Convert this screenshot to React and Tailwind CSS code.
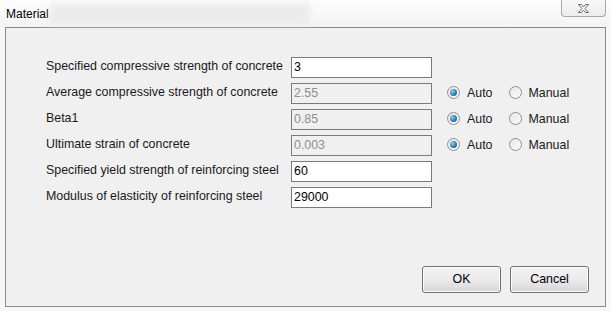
import React from "react";

const rows = [
  { label: "Specified compressive strength of concrete", value: "3" },
  { label: "Average compressive strength of concrete", value: "2.55", auto: true },
  { label: "Beta1", value: "0.85", auto: true },
  { label: "Ultimate strain of concrete", value: "0.003", auto: true },
  { label: "Specified yield strength of reinforcing steel", value: "60" },
  { label: "Modulus of elasticity of reinforcing steel", value: "29000" },
];

function Radio({ checked, label }) {
  return (
    <div className="flex items-center gap-[7px]">
      <span className="w-[13px] h-[13px] rounded-full border border-[#8e8f8f] bg-gradient-to-br from-[#e6e6e6] to-[#fbfbfb] flex items-center justify-center">
        {checked && (
          <span className="w-[7px] h-[7px] rounded-full bg-[radial-gradient(circle_at_35%_35%,#8fd0f5,#2a7fb5_55%,#134a6e)]" />
        )}
      </span>
      <span>{label}</span>
    </div>
  );
}

function Button({ children }) {
  return (
    <button className="w-[79px] h-[27px] rounded-[3px] border border-[#707070] bg-gradient-to-b from-[#f2f2f2] via-[#ebebeb] to-[#d6d6d6] text-[12.4px] text-black shadow-[inset_0_0_0_1px_#fcfcfc]">
      {children}
    </button>
  );
}

export default function App() {
  return (
    <div
      className="w-[611px] h-[311px] bg-[#f7f7f7] flex flex-col text-[12.4px] text-[#1a1a1a]"
      style={{ fontFamily: '"Liberation Sans", Arial, sans-serif' }}
    >
      <div className="h-[27px] flex items-start bg-gradient-to-b from-[#fdfdfd] to-[#f3f3f3]">
        <div className="pl-[6px] pt-[5px] text-[12px] text-black w-[50px]">Material</div>
        <div className="mt-[3px] w-[260px] h-[22px] bg-[#e6e6e6] blur-[3px] opacity-70" />
        <div className="flex-1" />
        <div className="w-[45px] h-[17px] mr-[5px] border border-t-0 border-[#a8a8a8] rounded-b-[4px] bg-gradient-to-b from-[#f8f8f8] to-[#ececec] flex items-center justify-center">
          <svg width="13" height="11" viewBox="0 0 13 11">
            <path
              d="M1.5 1.5h3l2 2.5 2-2.5h3l-3.5 4 3.5 4h-3l-2-2.5-2 2.5h-3l3.5-4z"
              fill="#fff"
              stroke="#6b6b6b"
              strokeWidth="1"
              strokeLinejoin="round"
            />
          </svg>
        </div>
      </div>
      <div className="mx-[5px] h-[280px] border border-[#8a8a8a] bg-[#f0f0f0] flex flex-col pl-[40px] pr-[15px] pt-[29px] pb-[13px]">
        <div className="flex flex-col gap-[6px]">
          {rows.map((r) => (
            <div key={r.label} className="flex items-center h-[20px]">
              <div className="w-[245px] text-[#1a1a1a] -mt-[2px]">{r.label}</div>
              <div
                className={`w-[141px] h-[21px] border border-[#7a7a7a] pl-[2px] flex items-center ${
                  r.auto ? "bg-[#f0f0f0] text-[#8d8d8d]" : "bg-white text-black"
                }`}
              >
                {r.value}
              </div>
              {r.auto && (
                <div className="flex items-center ml-[15px] gap-[16px]">
                  <Radio checked label="Auto" />
                  <Radio label="Manual" />
                </div>
              )}
            </div>
          ))}
        </div>
        <div className="flex-1" />
        <div className="flex justify-end gap-[9px] pr-[1px]">
          <Button>OK</Button>
          <Button>Cancel</Button>
        </div>
      </div>
    </div>
  );
}
